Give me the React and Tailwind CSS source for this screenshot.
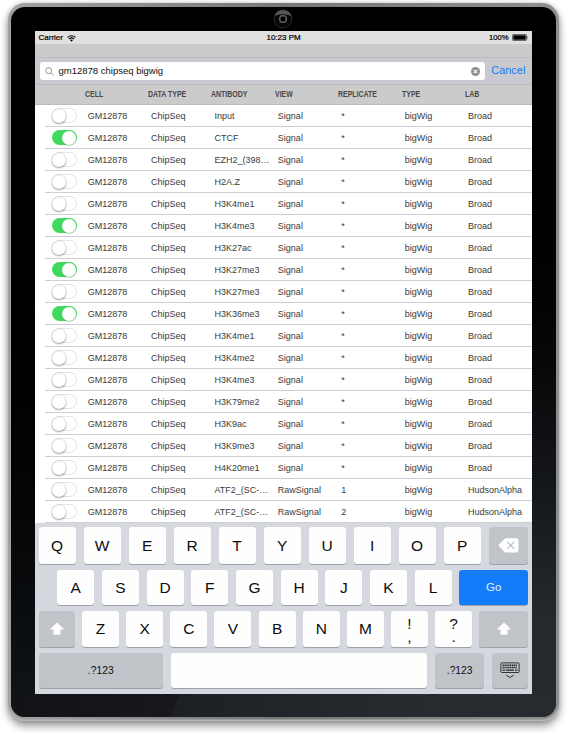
const COLUMNS = ["CELL", "DATA TYPE", "ANTIBODY", "VIEW", "REPLICATE", "TYPE", "LAB"];

// [selected, antibody, view, replicate, lab]
const ROWS = [
  [false, "Input", "Signal", "*", "Broad"],
  [true, "CTCF", "Signal", "*", "Broad"],
  [false, "EZH2_(398…", "Signal", "*", "Broad"],
  [false, "H2A.Z", "Signal", "*", "Broad"],
  [false, "H3K4me1", "Signal", "*", "Broad"],
  [true, "H3K4me3", "Signal", "*", "Broad"],
  [false, "H3K27ac", "Signal", "*", "Broad"],
  [true, "H3K27me3", "Signal", "*", "Broad"],
  [false, "H3K27me3", "Signal", "*", "Broad"],
  [true, "H3K36me3", "Signal", "*", "Broad"],
  [false, "H3K4me1", "Signal", "*", "Broad"],
  [false, "H3K4me2", "Signal", "*", "Broad"],
  [false, "H3K4me3", "Signal", "*", "Broad"],
  [false, "H3K79me2", "Signal", "*", "Broad"],
  [false, "H3K9ac", "Signal", "*", "Broad"],
  [false, "H3K9me3", "Signal", "*", "Broad"],
  [false, "H4K20me1", "Signal", "*", "Broad"],
  [false, "ATF2_(SC-…", "RawSignal", "1", "HudsonAlpha"],
  [false, "ATF2_(SC-…", "RawSignal", "2", "HudsonAlpha"],
];

function Toggle({ on }) {
  return (
    <span
      className={
        "flex h-[15.6px] w-[25.5px] items-center rounded-full " +
        (on ? "justify-end bg-[#41d95d] pr-[1px]" : "bg-white shadow-[inset_0_0_0_1px_#e6e6e6]")
      }
    >
      <span
        className={
          "size-[14px] rounded-full bg-white " +
          (on
            ? "shadow-[0_1px_1px_rgba(0,0,0,0.2)]"
            : "shadow-[0_0_0_0.5px_rgba(0,0,0,0.15),0_1px_2px_rgba(0,0,0,0.35)]")
        }
      />
    </span>
  );
}

function StatusBar() {
  return (
    <div className="flex h-[13px] items-center bg-[#e0e0e0] pl-[3.5px] pr-[3px] pt-[1px] text-[8px] leading-none text-black [-webkit-text-stroke:0.2px_black]">
      <div className="flex flex-1 items-center gap-[4px]">
        <span>Carrier</span>
        <svg width="9" height="7" viewBox="0 0 9 7" fill="none" stroke="#000" strokeWidth="1.1">
          <path d="M0.5 2.4a5.7 5.7 0 0 1 8 0M2 4.1a3.6 3.6 0 0 1 5 0" />
          <path d="M3.1 5.2a2 2 0 0 1 2.8 0L4.5 6.8z" fill="#000" stroke="none" />
        </svg>
      </div>
      <span>10:23 PM</span>
      <div className="flex flex-1 items-center justify-end gap-[3px]">
        <span className="text-[7.7px]">100%</span>
        <svg width="17" height="7" viewBox="0 0 17 7">
          <rect x="0.4" y="0.4" width="14.2" height="6.2" rx="1.2" fill="none" stroke="#222" strokeWidth="0.7" />
          <rect x="1.3" y="1.3" width="12.4" height="4.4" rx="0.5" fill="#000" />
          <path d="M15.3 2.2q1.2 1.3 0 2.6z" fill="#222" />
        </svg>
      </div>
    </div>
  );
}

function SearchBar() {
  return (
    <div className="flex h-[26px] items-center bg-[#c9c9cf] pl-[5px]">
      <div className="flex h-[18px] w-[444.5px] items-center rounded-[3px] bg-white pl-[5px] pr-[5px]">
        <svg width="9" height="9" viewBox="0 0 9 9" fill="none" stroke="#8b8b90" strokeWidth="0.9">
          <circle cx="3.7" cy="3.7" r="3" />
          <path d="M5.9 5.9L8.6 8.6" />
        </svg>
        <span className="ml-[4.5px] flex-1 text-[9.5px] leading-none text-[#111]">gm12878 chipseq bigwig</span>
        <svg width="9" height="9" viewBox="0 0 9 9">
          <circle cx="4.5" cy="4.5" r="4.5" fill="#8e8e93" />
          <path d="M2.8 2.8l3.4 3.4M6.2 2.8L2.8 6.2" stroke="#fff" strokeWidth="1.1" />
        </svg>
      </div>
      <span className="mb-[1px] ml-[6.7px] text-[11px] leading-none text-[#147bfa]">Cancel</span>
    </div>
  );
}

function Key({ children, className = "" }) {
  return (
    <div
      className={
        "flex items-center justify-center rounded-[3px] shadow-[0_1px_0.5px_rgba(120,125,132,0.6)] " + className
      }
    >
      {children}
    </div>
  );
}

const WHITE = "bg-[#fefefe] text-[15.5px] leading-none text-[#0c0c0c] w-[37px]";
const GRAY = "bg-[#c0c4c8] text-[10.3px] leading-none text-[#111]";

function Shift() {
  return (
    <svg width="16" height="14" viewBox="0 0 15 13" className="shrink-0">
      <path d="M7.5 0.5L14.3 7H10.8V11.2Q10.8 12 10 12H5Q4.2 12 4.2 11.2V7H0.7z" fill="#fff" />
    </svg>
  );
}

function DualKey({ top, bottom }) {
  return (
    <Key className={WHITE + " flex-col pt-[3px]"}>
      <span className="h-[15px]">{top}</span>
      <span className="h-[14px] leading-[11px]">{bottom}</span>
    </Key>
  );
}

function Keyboard() {
  return (
    <div className="flex flex-1 flex-col bg-[#d5d9df] px-[3.6px] pt-[4.3px]">
      <div className="flex h-[36.7px] justify-between">
        {"QWERTYUIOP".split("").map((k) => (
          <Key key={k} className={WHITE}>{k}</Key>
        ))}
        <Key className={GRAY + " w-[39.5px]"}>
          <svg width="21" height="15" viewBox="0 0 21 15" className="ml-[1px]">
            <path d="M6.6 0.8Q7.2 0.2 8 0.2H18.2Q20.5 0.2 20.5 2.5V12.2Q20.5 14.5 18.2 14.5H8Q7.2 14.5 6.6 13.9L1 8.3Q0.2 7.4 1 6.5z" fill="#fff" />
            <path d="M9.3 4L16 10.7M16 4L9.3 10.7" stroke="#c0c4c8" strokeWidth="1.3" />
          </svg>
        </Key>
      </div>
      <div className="mt-[5.8px] flex h-[35.7px] justify-between pl-[18.7px]">
        {"ASDFGHJKL".split("").map((k) => (
          <Key key={k} className={WHITE}>{k}</Key>
        ))}
        <Key className="w-[68.7px] bg-[#147bfa] text-[11.5px] leading-none text-[#e4f0ff]">Go</Key>
      </div>
      <div className="mt-[6px] flex h-[35.5px] justify-between">
        <Key className={GRAY + " w-[36.3px]"}><Shift /></Key>
        {"ZXCVBNM".split("").map((k) => (
          <Key key={k} className={WHITE}>{k}</Key>
        ))}
        <DualKey top="!" bottom="," />
        <DualKey top="?" bottom="." />
        <Key className={GRAY + " w-[48.7px]"}><Shift /></Key>
      </div>
      <div className="mt-[6px] flex h-[35.5px] justify-between">
        <Key className={GRAY + " w-[124.3px]"}>.?123</Key>
        <Key className="w-[256.5px] bg-[#fefefe]" />
        <Key className={GRAY + " w-[49px]"}>.?123</Key>
        <Key className={GRAY + " w-[36px]"}>
          <svg width="20" height="17" viewBox="0 0 20 17" fill="none" stroke="#222" className="mr-[1px]">
            <rect x="0.9" y="0.9" width="18.2" height="9.6" rx="1" strokeWidth="0.9" />
            <path d="M2.6 3.2H17.4M2.6 5.5H17.4" strokeWidth="1.5" strokeDasharray="1.3 0.55" />
            <path d="M2.6 8.1H5M6 8.1H14M15 8.1H17.4" strokeWidth="1.4" />
            <path d="M6.3 13.2L10 15.5L13.7 13.2" strokeWidth="0.9" />
          </svg>
        </Key>
      </div>
    </div>
  );
}

function Screen() {
  return (
    <div className="flex h-[662.7px] w-[496.7px] flex-col overflow-hidden bg-white">
      <StatusBar />
      <div className="h-[14px] border-b border-[#bcbcc2] bg-[#cbcbcb]" />
      <SearchBar />
      <div className="flex h-[21px] items-center border-y border-[#bbbbbf] bg-[#cbcbcb] pl-[49.7px] pt-[1px]">
        {COLUMNS.map((c) => (
          <div key={c} className="flex w-[63.4px] shrink-0 items-center">
            <span className="origin-left scale-x-[0.75] whitespace-nowrap text-[9.3px] font-bold leading-none text-[#484848]">
              {c}
            </span>
          </div>
        ))}
      </div>
      {ROWS.map(([on, antibody, view, replicate, lab], i) => (
        <div
          key={i}
          className="ml-[9.7px] flex h-[22px] shrink-0 items-center border-b border-[#cfced5] pl-[7px] text-[9px] leading-none text-[#3a3a3a]"
        >
          <div className="w-[36px] shrink-0">
            <Toggle on={on} />
          </div>
          {["GM12878", "ChipSeq", antibody, view, replicate, "bigWig", lab].map((t, j) => (
            <span key={j} className="w-[63.4px] shrink-0 whitespace-nowrap pt-[1px]">{t}</span>
          ))}
        </div>
      ))}
      <Keyboard />
    </div>
  );
}

export default function App() {
  return (
    <div className="h-[733px] w-[567px] overflow-hidden bg-white pl-[7.5px] pt-[3px] font-['Liberation_Sans',Arial,sans-serif]">
      <div className="h-[717.5px] w-[551.5px] rounded-[17px] bg-linear-to-r from-[#a2a2a2] via-[#777] to-[#8f8f8f] p-[3.5px] shadow-[inset_0_-1.5px_0.5px_#b5b5b5,0_5px_8px_rgba(0,0,0,0.4),0_0_5px_rgba(0,0,0,0.18)]">
        <div className="flex h-full flex-col overflow-hidden rounded-[14px] bg-black">
          <div className="flex h-[24.5px] shrink-0 items-center justify-center">
            <svg width="20" height="20" viewBox="0 0 20 20">
              <circle cx="10" cy="10" r="9" fill="#070707" stroke="#333" strokeWidth="0.8" />
              <path d="M1.5 7A9 9 0 0 1 18.5 7Q10 3.4 1.5 7z" fill="#555" />
              <rect x="6.9" y="6.9" width="6.2" height="6.2" rx="1.5" fill="#000" stroke="#aaa" strokeWidth="0.9" />
            </svg>
          </div>
          <div className="flex h-[662.7px] shrink-0">
            <div className="w-[24px] shrink-0 bg-linear-to-b from-black from-25% to-[#101316]" />
            <Screen />
            <div className="flex-1 bg-linear-to-b from-black from-15% to-[#262a2f] to-90%" />
          </div>
          <div className="flex-1 bg-[linear-gradient(115deg,#101215_0%,#16181b_30.3%,#1d2023_30.8%,#272b30_75%)]" />
        </div>
      </div>
    </div>
  );
}
